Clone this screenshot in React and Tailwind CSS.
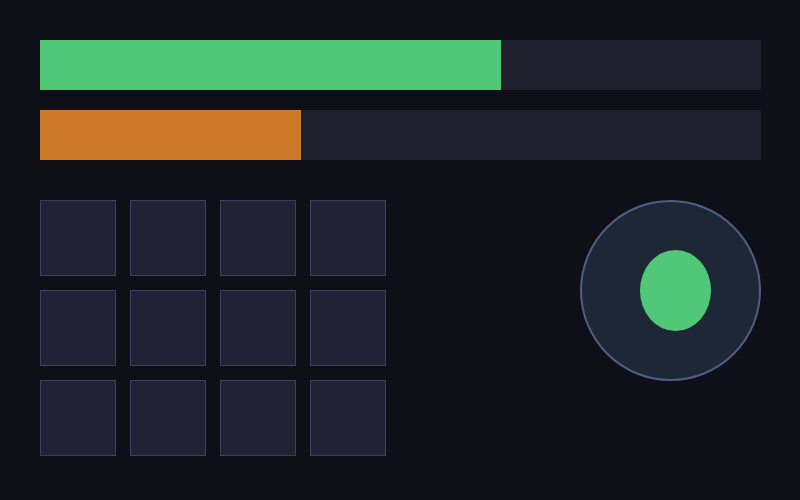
const bars = [
  { pct: 64, color: 'bg-[#50c878]' },
  { pct: 36.2, color: 'bg-[#cc7a2a]' },
];

export default function App() {
  return (
    <div className="w-[800px] h-[500px] bg-[#0f0f17] p-10 flex flex-col gap-5 overflow-hidden">
      {bars.map((b, i) => (
        <div key={i} className="w-[721px] h-[50px] bg-[#1f1f2d]">
          <div className={`h-full ${b.color}`} style={{ width: `${b.pct}%` }} />
        </div>
      ))}

      <div className="mt-5 flex justify-between w-[721px]">
        <div className="grid grid-cols-[repeat(4,76px)] gap-[14px]">
          {Array.from({ length: 12 }).map((_, i) => (
            <div key={i} className="w-[76px] h-[76px] bg-[#222136] border border-[#423f5e]" />
          ))}
        </div>

        {/* joystick pad */}
        <div className="relative w-[181px] h-[181px] rounded-full bg-[#1e2735] border-2 border-[#4f5e86]">
          <div className="absolute left-[58px] top-[48px] w-[71px] h-[81px] rounded-[50%] bg-[#50c878]" />
        </div>
      </div>
    </div>
  );
}
